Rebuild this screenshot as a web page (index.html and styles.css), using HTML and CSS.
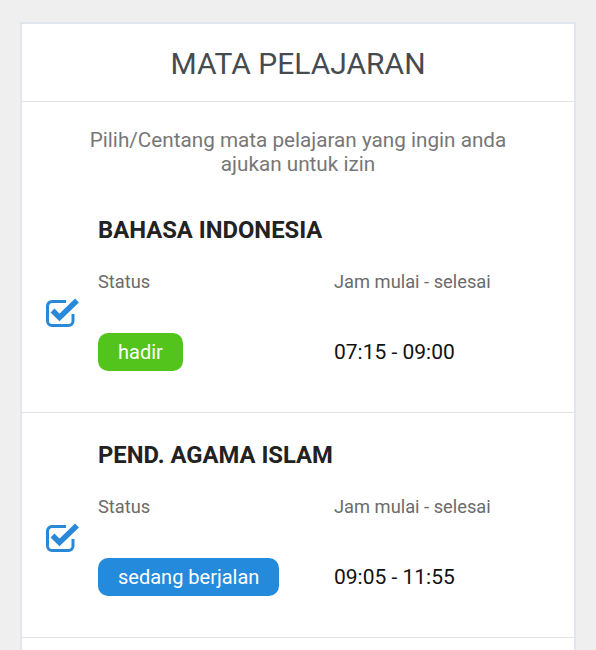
FILE: index.html
```html
<!DOCTYPE html>
<html lang="id">
<head>
<meta charset="utf-8">
<title>Mata Pelajaran</title>
<link rel="stylesheet" href="styles.css">
</head>
<body>
<div class="card">
  <div class="card-header">MATA PELAJARAN</div>
  <p class="hint">Pilih/Centang mata pelajaran yang ingin anda ajukan untuk izin</p>

  <div class="item">
    <h3 class="title">BAHASA INDONESIA</h3>
    <div class="check">
      <svg width="38" height="32" viewBox="0 0 38 32"><path d="M22 4.5H8a4.5 4.5 0 0 0-4.5 4.5V24A4.5 4.5 0 0 0 8 28.5H24.5A4.5 4.5 0 0 0 29 24V17" fill="none" stroke="#2a88d8" stroke-width="3"/><path d="M8.5 13.5L15.5 20.5L33 3.5" fill="none" stroke="#2a88d8" stroke-width="5.5"/></svg>
    </div>
    <div class="label">Status</div>
    <div class="label">Jam mulai - selesai</div>
    <div class="value"><span class="badge badge-green">hadir</span></div>
    <div class="value time">07:15 - 09:00</div>
  </div>

  <div class="item">
    <h3 class="title">PEND. AGAMA ISLAM</h3>
    <div class="check">
      <svg width="38" height="32" viewBox="0 0 38 32"><path d="M22 4.5H8a4.5 4.5 0 0 0-4.5 4.5V24A4.5 4.5 0 0 0 8 28.5H24.5A4.5 4.5 0 0 0 29 24V17" fill="none" stroke="#2a88d8" stroke-width="3"/><path d="M8.5 13.5L15.5 20.5L33 3.5" fill="none" stroke="#2a88d8" stroke-width="5.5"/></svg>
    </div>
    <div class="label">Status</div>
    <div class="label">Jam mulai - selesai</div>
    <div class="value"><span class="badge badge-blue">sedang berjalan</span></div>
    <div class="value time">09:05 - 11:55</div>
  </div>
</div>
</body>
</html>
```
FILE: styles.css
```css
* { box-sizing: border-box; }
html, body { margin: 0; padding: 0; }
body {
  background: #efefef;
  font-family: Roboto, "Liberation Sans", sans-serif;
  padding: 22px 20px 0;
  overflow: hidden;
}
.card {
  background: #fff;
  border: 2px solid #e0e6ed;
  border-bottom: none;
  padding-bottom: 60px;
}
.card-header {
  height: 78px;
  display: flex;
  align-items: center;
  justify-content: center;
  font-size: 30px;
  color: #464b50;
  border-bottom: 1px solid #e2e2e2;
  padding-top: 2px;
}
.hint {
  margin: 0;
  padding: 26px 56px 12px;
  text-align: center;
  font-size: 20.7px;
  line-height: 24px;
  color: #777;
}
.item {
  display: grid;
  grid-template-columns: 76px 236px 1fr;
  grid-template-rows: auto auto auto;
  padding: 29px 0 41px;
  border-bottom: 1px solid #e3e3e3;
}
.title {
  grid-column: 2 / 4;
  grid-row: 1;
  margin: 0 0 28px;
  font-size: 23.8px;
  line-height: 26px;
  font-weight: 700;
  color: #222;
}
.check {
  grid-column: 1;
  grid-row: 2 / 4;
  align-self: center;
  padding-left: 22px;
  margin-bottom: 16px;
  line-height: 0;
}
.label {
  grid-row: 2;
  font-size: 18.3px;
  line-height: 22px;
  color: #6b6b6b;
  margin-bottom: 40px;
}
.value {
  grid-row: 3;
  display: flex;
  align-items: center;
  height: 38px;
}
.time {
  font-size: 21px;
  color: #111;
}
.badge {
  display: inline-flex;
  align-items: center;
  height: 38px;
  padding: 0 20px;
  border-radius: 10px;
  color: #fff;
  font-size: 20px;
}
.badge-green { background: #53c41c; }
.badge-blue { background: #248bdc; }
```
